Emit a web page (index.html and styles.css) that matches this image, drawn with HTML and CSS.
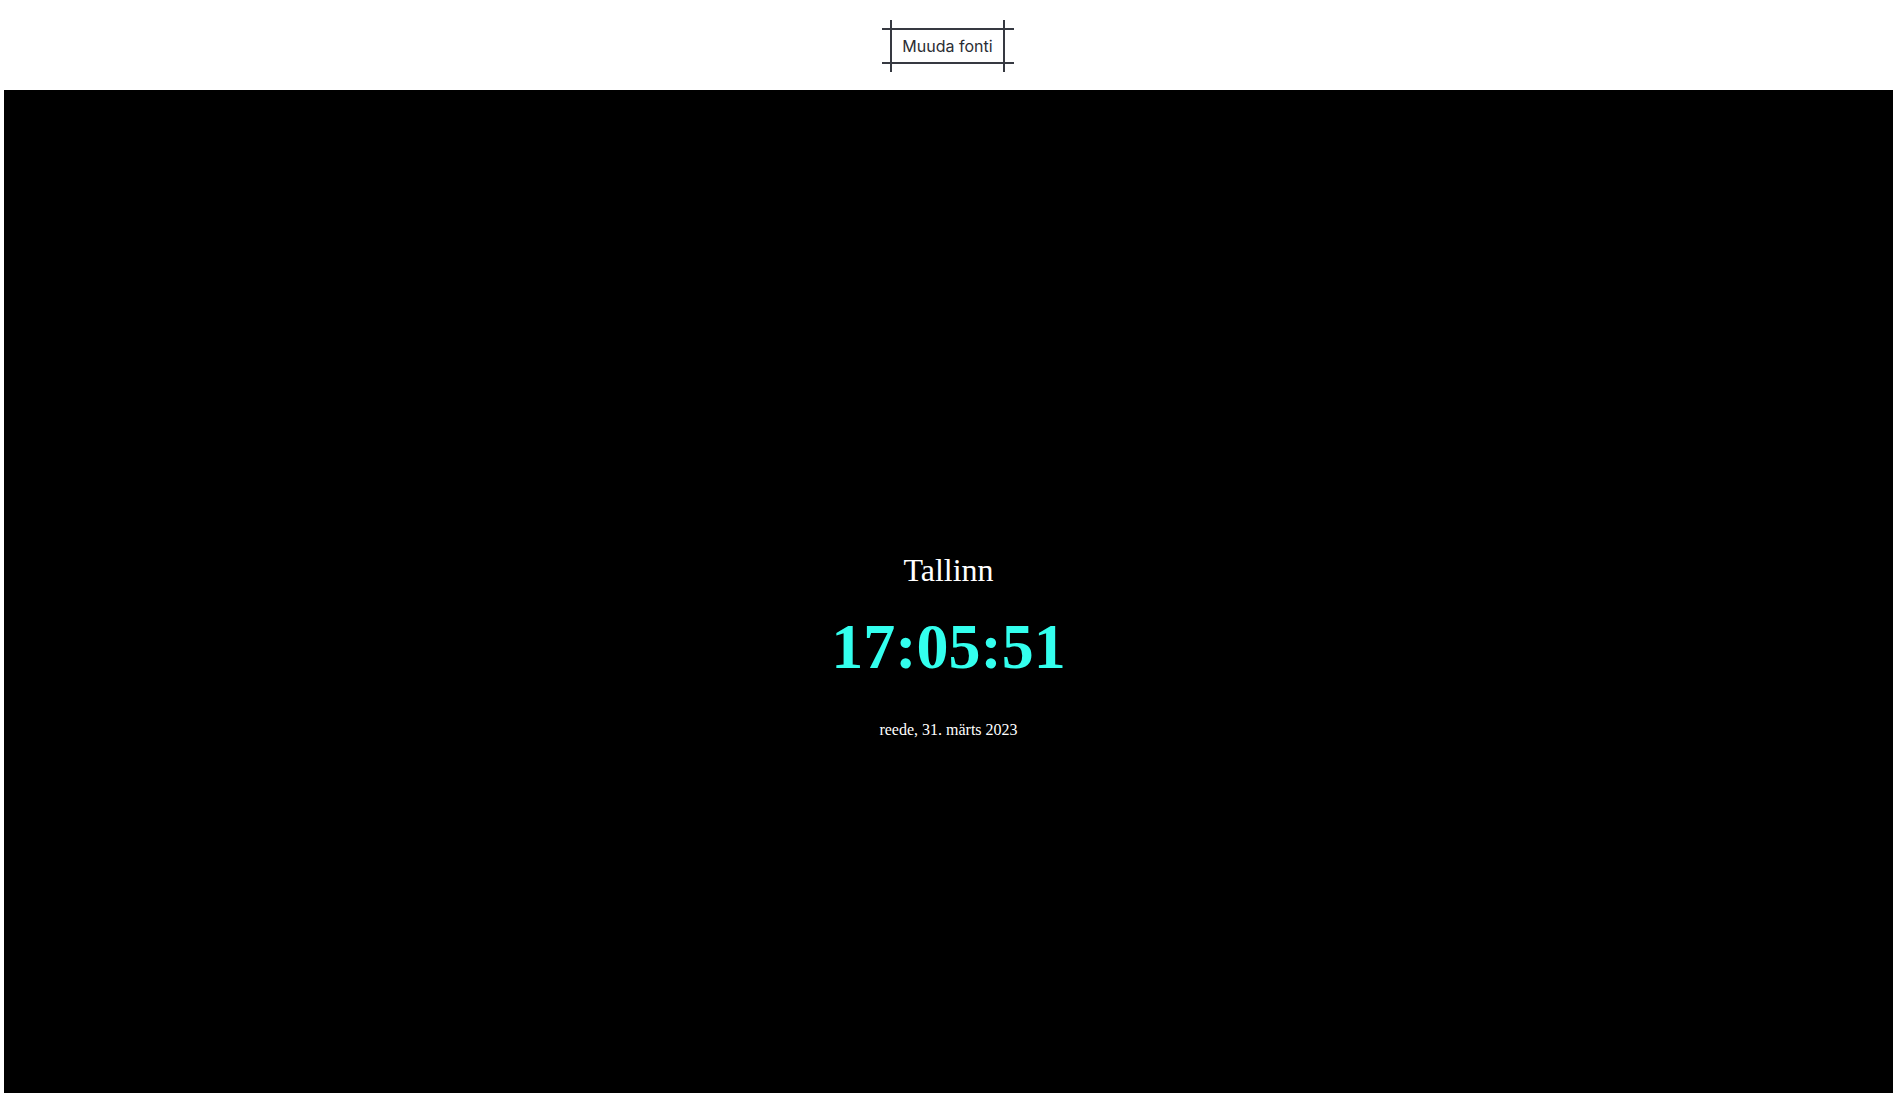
FILE: index.html
```html
<!DOCTYPE html>
<html lang="et">
<head>
<meta charset="utf-8">
<title>Kell</title>
<link rel="stylesheet" href="styles.css">
</head>
<body>
<header class="top">
  <button class="font-btn" type="button">Muuda fonti</button>
</header>
<main class="clock">
  <div class="city">Tallinn</div>
  <div class="time">17:05:51</div>
  <div class="date">reede, 31. märts 2023</div>
</main>
</body>
</html>
```
FILE: styles.css
```css
html, body {
  margin: 0;
  padding: 0;
  background: #fff;
  overflow: hidden;
}

.top {
  height: 90px;
  display: flex;
  justify-content: center;
  align-items: flex-start;
}

.font-btn {
  position: relative;
  margin-top: 28px;
  margin-left: 2px;
  width: 115px;
  height: 36px;
  padding: 0;
  background: #fff;
  border: 2px solid #363941;
  color: #2b2d33;
  font-family: Inter, "Noto Sans", sans-serif;
  font-size: 16px;
  line-height: 1;
}

.font-btn::before {
  content: "";
  position: absolute;
  top: -2px;
  bottom: -2px;
  left: -10px;
  right: -11px;
  border-top: 2px solid #363941;
  border-bottom: 2px solid #363941;
}

.font-btn::after {
  content: "";
  position: absolute;
  left: -2px;
  right: -2px;
  top: -10px;
  bottom: -10px;
  border-left: 2px solid #363941;
  border-right: 2px solid #363941;
}

.clock {
  margin-left: 4px;
  height: 1093px;
  background: #000;
  display: flex;
  flex-direction: column;
  align-items: center;
  justify-content: center;
  padding-top: 17px;
  box-sizing: border-box;
  font-family: "Liberation Serif", "Times New Roman", serif;
}

.city {
  color: #fff;
  font-size: 32px;
}

.time {
  margin-top: 21px;
  color: #33ffee;
  font-size: 64px;
  font-weight: bold;
}

.date {
  margin-top: 37px;
  color: #fff;
  font-size: 16px;
}
```
